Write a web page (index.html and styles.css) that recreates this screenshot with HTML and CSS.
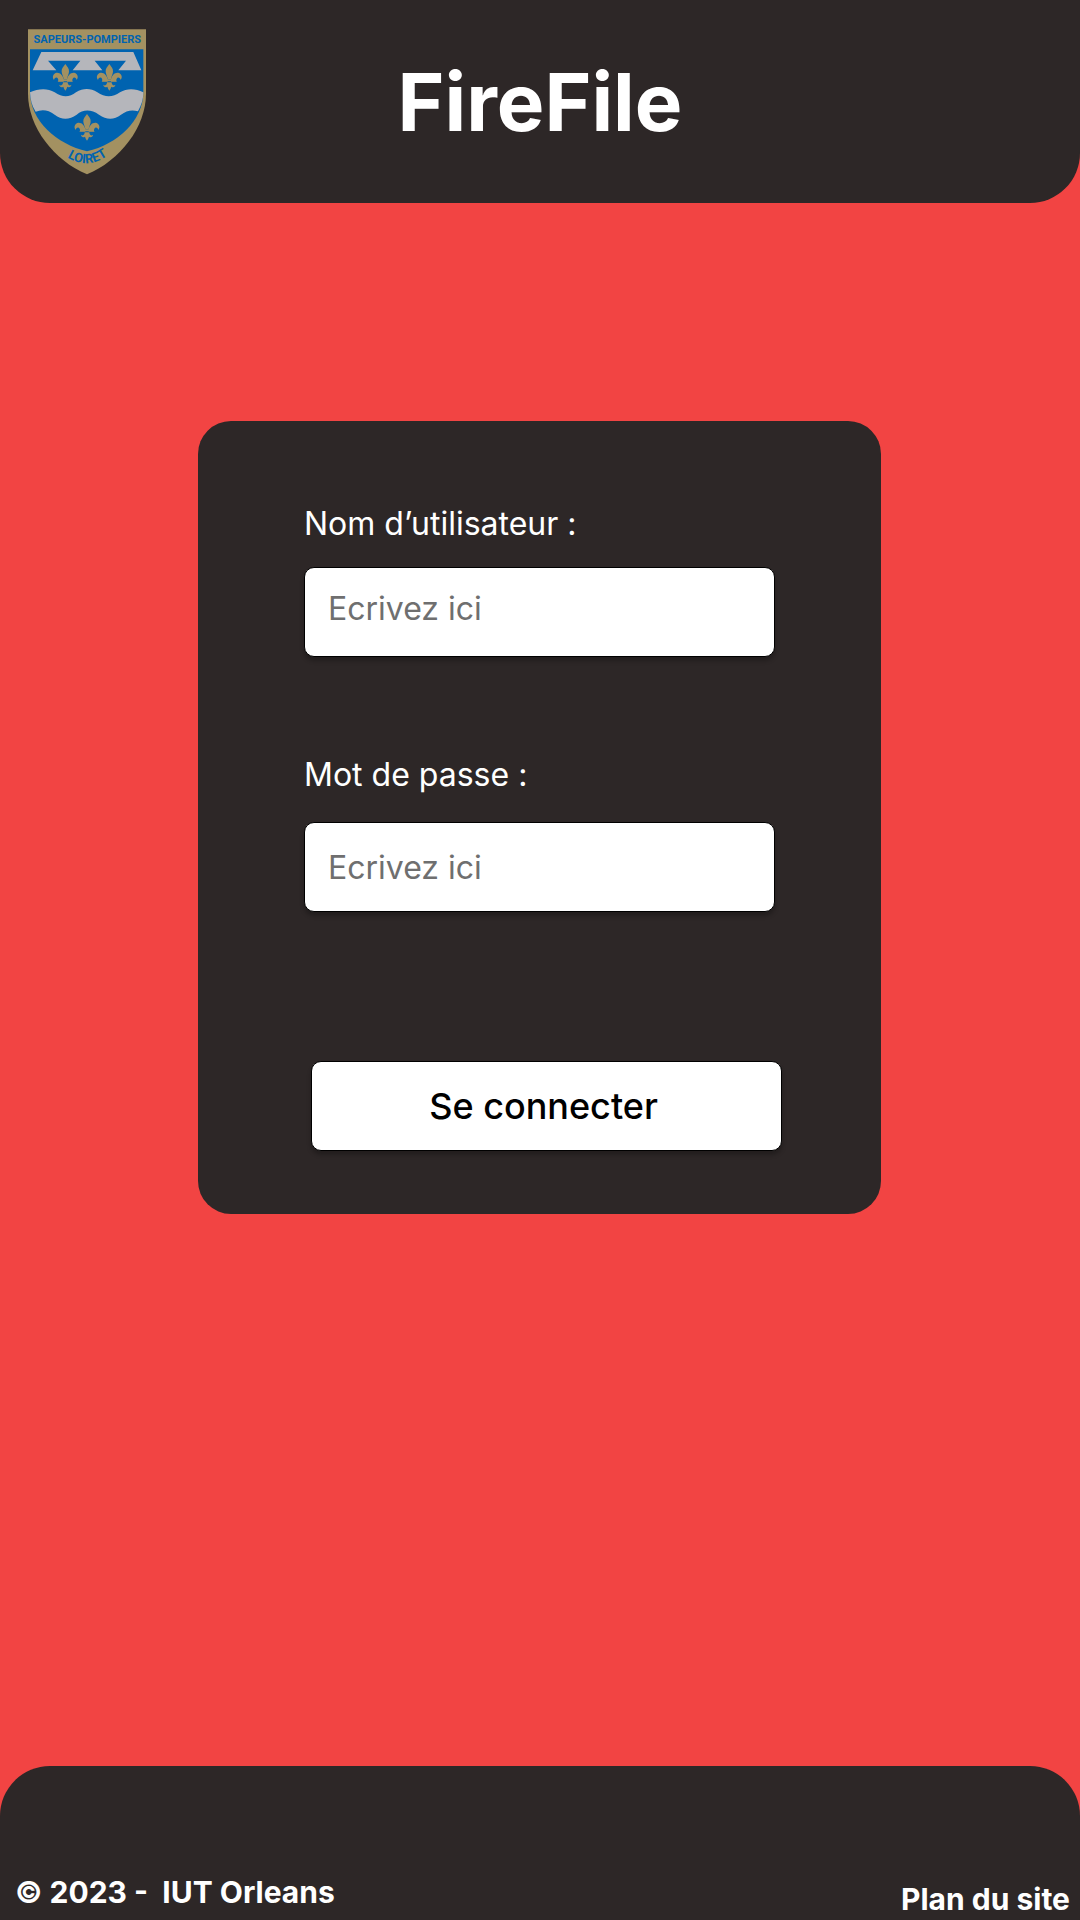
FILE: index.html
```html
<!DOCTYPE html>
<html lang="fr">
<head>
  <meta charset="utf-8">
  <meta name="viewport" content="width=device-width, initial-scale=1">
  <title>FireFile</title>
  <link rel="stylesheet" href="styles.css">
</head>
<body>
  <header class="site-header">
    <svg class="crest" viewBox="24 26 354 438" role="img" aria-label="Sapeurs-Pompiers Loiret">
      <defs>
        <g id="lily">
          <path d="M0-38C-6-30-12-24-11-15C-10-7-6-1-5 7H5C6-1 10-7 11-15C12-24 6-30 0-38Z"/>
          <path d="M-5 8C-7-4-16-13-26-12C-36-10-41 0-34 10C-33 2-25 0-22 6C-20 10-21 13-23 15H-5Z"/>
          <path d="M5 8C7-4 16-13 26-12C36-10 41 0 34 10C33 2 25 0 22 6C20 10 21 13 23 15H5Z"/>
          <path d="M-20 8H20V14H-20ZM-7 17H7C7 25 13 29 18 24C18 30 12 34 6 30C5 34 3 38 0 42C-3 38-5 34-6 30C-12 34-18 30-18 24C-13 29-7 25-7 17Z"/>
        </g>
        <path id="loiret-curve" d="M130 403Q202 457 274 397"/>
      </defs>
      <path class="gold" d="M24 27H378V220C378 320 300 420 201 462C102 420 24 320 24 220Z"/>
      <path class="blue" d="M30 87H370V215C370 300 292 372 201 393C110 372 30 300 30 215Z"/>
      <path class="silver" d="M64 95H340L364 150H295L318 121H224L247 150H158L181 121H84L109 150H38Z"/>
      <path class="silver" d="M30 216C55 205 82 203 104 216C127 232 148 232 168 216C190 203 211 203 232 216C255 232 278 232 300 216C322 203 347 205 370 216C370 238 364 255 354 273C334 267 319 272 303 283C282 299 260 299 237 283C214 267 190 266 170 283C148 299 125 300 104 283C85 268 66 266 47 274C36 258 31 238 30 216Z"/>
      <use class="gold" href="#lily" x="136" y="169"/>
      <use class="gold" href="#lily" x="268" y="169"/>
      <use class="gold" href="#lily" x="201" y="319"/>
      <text class="crest-text" x="202" y="68" text-anchor="middle">SAPEURS-POMPIERS</text>
      <text class="crest-text crest-text-large"><textPath href="#loiret-curve" startOffset="50%" text-anchor="middle">LOIRET</textPath></text>
    </svg>
    <h1 class="site-title">FireFile</h1>
  </header>

  <main class="content">
    <form class="login-card">
      <div class="field">
        <label class="field-label" for="username">Nom d’utilisateur :</label>
        <input class="text-input text-input-raised" id="username" type="text" placeholder="Ecrivez ici">
      </div>
      <div class="field field-password">
        <label class="field-label" for="password">Mot de passe :</label>
        <input class="text-input" id="password" type="password" placeholder="Ecrivez ici">
      </div>
      <div class="actions">
        <button class="submit" type="submit">Se connecter</button>
      </div>
    </form>
  </main>

  <footer class="site-footer">
    <p class="copyright">© 2023 -&nbsp; IUT Orleans</p>
    <a class="sitemap" href="#">Plan du site</a>
  </footer>
</body>
</html>
```

FILE: styles.css
```css
* {
  box-sizing: border-box;
}

body {
  display: flex;
  flex-direction: column;
  min-height: 100vh;
  margin: 0;
  background: #f24443;
  color: #fff;
  font-family: Inter, "Liberation Sans", sans-serif;
}

.site-header {
  display: grid;
  grid-template-columns: 118px 1fr 118px;
  align-items: start;
  padding: 29px 28px 28px;
  border-radius: 0 0 50px 50px;
  background: #2d2727;
}

.crest {
  display: block;
  width: 118px;
  height: 146px;
}

.gold {
  fill: #a39161;
}

.blue {
  fill: #0063b0;
}

.silver {
  fill: #b5b6bb;
}

.crest-text {
  fill: #0063b0;
  font-family: Roboto, "Liberation Sans", sans-serif;
  font-size: 33px;
  font-weight: 700;
}

.crest-text-large {
  font-size: 39px;
}

.site-title {
  margin: 0;
  padding-top: 24px;
  font-size: 80px;
  font-weight: 700;
  line-height: 98px;
  text-align: center;
}

.content {
  flex: 1;
  padding: 218px 25px 48px 24px;
}

.login-card {
  width: 100%;
  max-width: 683px;
  margin: 0 auto;
  padding: 83px 106px 63px;
  border-radius: 33px;
  background: #2d2727;
}

.field {
  display: flex;
  flex-direction: column;
  gap: 23px;
}

.field-password {
  gap: 27px;
  margin-top: 98px;
}

.field-label {
  font-size: 32px;
  line-height: 40px;
}

.text-input,
.submit {
  width: 100%;
  height: 90px;
  border: 1px solid #000;
  border-radius: 10px;
  background: #fff;
  box-shadow: 0 4px 4px rgba(0, 0, 0, 0.25);
  color: #000;
  font-family: inherit;
}

.text-input {
  padding: 0 23px;
  font-size: 32px;
}

.text-input-raised {
  padding-bottom: 8px;
}

.text-input::placeholder {
  color: #6f6f6f;
  opacity: 1;
}

.actions {
  margin: 149px -7px 0 7px;
}

.submit {
  padding: 0 6px 0 0;
  font-size: 36px;
  font-weight: 500;
}

.site-footer {
  display: flex;
  justify-content: space-between;
  align-items: flex-end;
  padding: 108px 10px 3px 15px;
  border-radius: 50px 50px 0 0;
  background: #2d2727;
  font-size: 30px;
  font-weight: 700;
  line-height: 36px;
}

.copyright {
  margin: 0;
  padding-bottom: 7px;
}

.sitemap {
  color: inherit;
  text-decoration: none;
}
```
